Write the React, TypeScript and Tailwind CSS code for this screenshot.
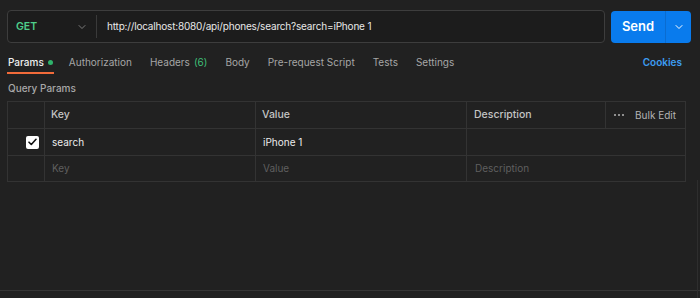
import { ChevronDown } from 'lucide-react';

const tabs = [
  { label: 'Authorization' },
  { label: 'Headers', count: '(6)' },
  { label: 'Body' },
  { label: 'Pre-request Script' },
  { label: 'Tests' },
  { label: 'Settings' },
];

function App() {
  return (
    <div
      className="relative w-[700px] h-[298px] overflow-hidden bg-[#212121] text-[#e6e6e6]"
      style={{ fontFamily: 'Inter, "Liberation Sans", sans-serif' }}
    >
      {/* Request bar */}
      <div className="flex items-center gap-[6px] pl-[7px] pt-[10px]">
        <div className="flex items-center w-[598px] h-[33px] rounded-[4px] border border-[#3d3d3d] bg-[#1c1c1c]">
          <div className="flex items-center justify-between w-[88px] pl-[8px] pr-[8px] text-[10.5px] font-semibold text-[#4fcf8a]">
            <span>GET</span>
            <ChevronDown size={12} strokeWidth={1.5} className="text-[#9a9a9a]" />
          </div>
          <div className="w-px h-[23px] bg-[#3a3a3a]" />
          <div className="pl-[10px] text-[10px] tracking-[-0.18px] text-[#e8e8e8]">
            http://localhost:8080/api/phones/search?search=iPhone 1
          </div>
        </div>
        <div className="flex items-stretch w-[80px] h-[32px] rounded-[4px] bg-[#097bed]">
          <div className="flex items-center justify-center w-[54px] text-[13px] font-semibold text-white">Send</div>
          <div className="w-px bg-[#0a6cd0]" />
          <div className="flex flex-1 items-center justify-center">
            <ChevronDown size={12} strokeWidth={2} className="text-white" />
          </div>
        </div>
      </div>

      {/* Tabs */}
      <div className="flex items-center justify-between pl-[7px] pr-[18px] mt-[8px] h-[22px] text-[10px]">
        <div className="flex items-center h-full">
          <div className="relative flex items-center h-full pl-px pr-[1px] text-[#f0f0f0] font-medium">
            Params
            <span className="ml-[4px] w-[5px] h-[5px] rounded-full bg-[#2fb36b]" />
            <span className="absolute left-0 right-0 bottom-[-1px] h-[2px] bg-[#f26b3a]" />
          </div>
          {tabs.map((t, i) => (
            <div
              key={t.label}
              className={`flex items-center h-full text-[#a6a6a6] ${i === 0 ? 'ml-[15px]' : 'ml-[18px]'}`}
            >
              {t.label}
              {t.count && <span className="ml-[4px] text-[#3fbf76]">{t.count}</span>}
            </div>
          ))}
        </div>
        <div className="text-[10px] font-semibold text-[#3d9cf0]">Cookies</div>
      </div>

      <div className="pl-[8px] mt-[8px] text-[10px] font-medium text-[#a8a8a8]">Query Params</div>

      {/* Params table */}
      <table className="ml-[7px] mt-[5px] w-[678px] table-fixed border-collapse text-[10px]">
        <colgroup>
          <col className="w-[37px]" />
          <col className="w-[211px]" />
          <col className="w-[211px]" />
          <col className="w-[139px]" />
          <col className="w-[80px]" />
        </colgroup>
        <tbody>
          <tr className="h-[27px] text-[#c4c4c4] font-medium text-[10.5px]">
            <td className="border border-[#333333]" />
            <td className="border border-[#333333] pl-[6px]">Key</td>
            <td className="border border-[#333333] pl-[6px]">Value</td>
            <td className="border border-[#333333] pl-[7px]">Description</td>
            <td className="border border-[#333333]">
              <div className="flex items-center pl-[8px] gap-[11px] text-[#b4b4b4]">
                <span className="flex gap-[2px]">
                  <span className="w-[2px] h-[2px] rounded-full bg-[#b4b4b4]" />
                  <span className="w-[2px] h-[2px] rounded-full bg-[#b4b4b4]" />
                  <span className="w-[2px] h-[2px] rounded-full bg-[#b4b4b4]" />
                </span>
                <span className="font-normal text-[10px]">Bulk Edit</span>
              </div>
            </td>
          </tr>
          <tr className="h-[27px] text-[#ececec]">
            <td className="border border-[#333333]">
              <div className="flex justify-end pr-[5px]">
                <div className="flex items-center justify-center w-[13px] h-[13px] rounded-[2px] bg-white">
                  <svg width="9" height="8" viewBox="0 0 9 8" fill="none">
                    <path d="M1 4.2 3.3 6.5 8 1.3" stroke="#111" strokeWidth="1.6" strokeLinecap="round" strokeLinejoin="round" />
                  </svg>
                </div>
              </div>
            </td>
            <td className="border border-[#333333] pl-[7px]">search</td>
            <td className="border border-[#333333] pl-[7px]">iPhone 1</td>
            <td className="border border-[#333333]" colSpan={2} />
          </tr>
          <tr className="h-[26px] text-[#5f5f5f]">
            <td className="border border-[#333333]" />
            <td className="border border-[#333333] pl-[7px]">Key</td>
            <td className="border border-[#333333] pl-[7px]">Value</td>
            <td className="border border-[#333333] pl-[8px]" colSpan={2}>
              Description
            </td>
          </tr>
        </tbody>
      </table>

      {/* Bottom pane edge */}
      <div className="absolute left-0 right-0 top-[290px] h-px bg-[#353535]" />
      <div className="absolute right-[2px] top-[180px] bottom-0 w-px bg-[#2e2e2e]" />
    </div>
  );
}

export default App;
